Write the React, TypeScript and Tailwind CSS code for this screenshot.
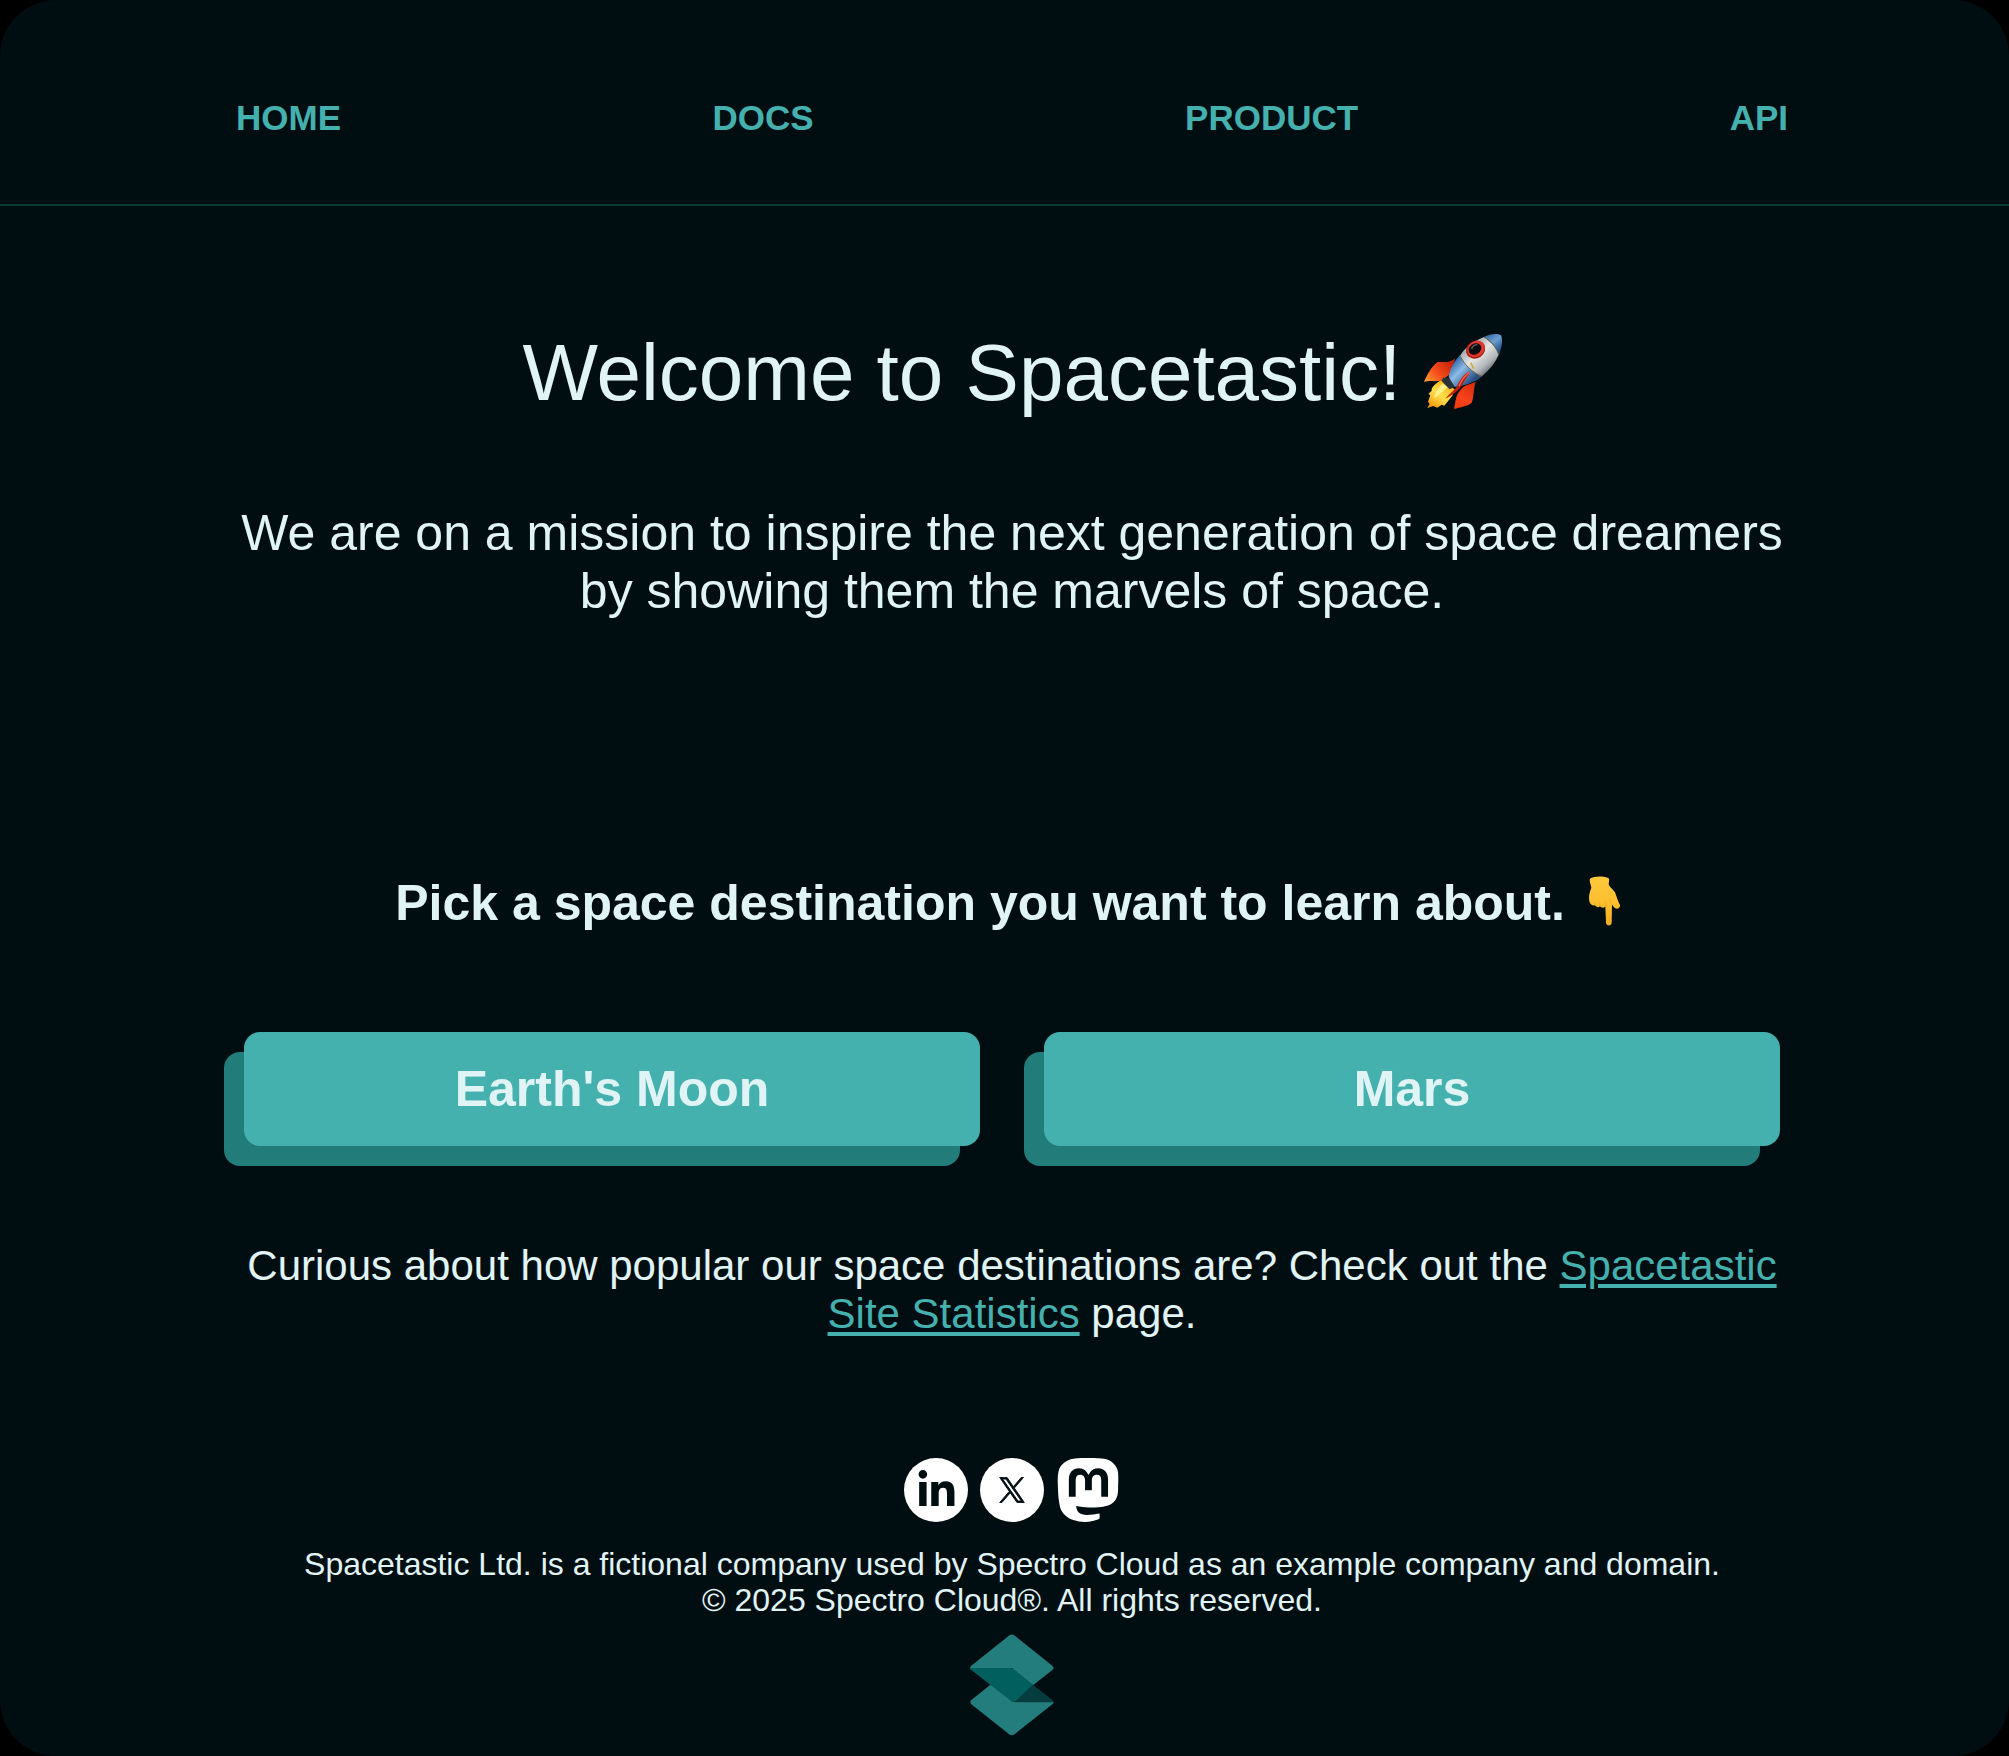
import { FaLinkedinIn } from "react-icons/fa6";
import { SiMastodon } from "react-icons/si";

const navItems = ["HOME", "DOCS", "PRODUCT", "API"];
const destinations = ["Earth's Moon", "Mars"];

function Rocket() {
  return (
    <svg viewBox="66 60 234 240" className="inline-block h-[80px] w-[78px] align-[-11px]" role="img" aria-label="rocket">
      <defs>
        <linearGradient id="body" x1="180" y1="110" x2="250" y2="190" gradientUnits="userSpaceOnUse">
          <stop offset="0" stopColor="#8f9a9e" />
          <stop offset="0.45" stopColor="#e4e6e6" />
          <stop offset="0.8" stopColor="#b3b7b9" />
          <stop offset="1" stopColor="#6d7478" />
        </linearGradient>
        <linearGradient id="blue" x1="150" y1="160" x2="205" y2="215" gradientUnits="userSpaceOnUse">
          <stop offset="0" stopColor="#3a6fae" />
          <stop offset="0.4" stopColor="#8dbbe6" />
          <stop offset="1" stopColor="#274f86" />
        </linearGradient>
        <linearGradient id="nose" x1="260" y1="75" x2="296" y2="120" gradientUnits="userSpaceOnUse">
          <stop offset="0" stopColor="#3f74ad" />
          <stop offset="0.4" stopColor="#6c9fd0" />
          <stop offset="1" stopColor="#1f4680" />
        </linearGradient>
        <linearGradient id="finLeft" x1="140" y1="150" x2="72" y2="214" gradientUnits="userSpaceOnUse">
          <stop offset="0" stopColor="#c8230c" />
          <stop offset="0.55" stopColor="#f8501c" />
          <stop offset="1" stopColor="#ffa030" />
        </linearGradient>
        <linearGradient id="finRight" x1="215" y1="215" x2="160" y2="292" gradientUnits="userSpaceOnUse">
          <stop offset="0" stopColor="#d62c0e" />
          <stop offset="0.6" stopColor="#f8431a" />
          <stop offset="1" stopColor="#ec3810" />
        </linearGradient>
        <linearGradient id="flame" x1="135" y1="215" x2="85" y2="285" gradientUnits="userSpaceOnUse">
          <stop offset="0" stopColor="#ffb41c" />
          <stop offset="0.5" stopColor="#ffe04a" />
          <stop offset="1" stopColor="#f59a10" />
        </linearGradient>
      </defs>
      <path d="M160 142C142 158 125 152 106 153C86 170 75 192 66 213C83 207 104 214 121 207L144 190Z" fill="url(#finLeft)" />
      <path d="M221 212C209 219 186 220 176 236C160 253 161 271 156 294C174 288 198 286 209 275C215 262 213 244 221 212Z" fill="url(#finRight)" />
      <path d="M118 207C97 219 87 232 89 239L79 249L85 253L78 272L83 279L76 291L94 285L106 290L119 281L127 284L151 254L158 235Z" fill="url(#flame)" />
      <path d="M121 218C108 231 99 245 96 262C111 253 126 239 137 228Z" fill="#fff08a" />
      <path d="M124 200L118 209L143 235L156 229L145 200Z" fill="#283238" />
      <path d="M174 132C156 151 144 174 140 197L158 228C186 224 221 215 239 196Z" fill="url(#blue)" />
      <path d="M246 78C214 91 188 110 174 134C187 161 210 184 240 196C264 176 281 153 291 130C283 109 267 92 246 78Z" fill="url(#body)" />
      <path d="M246 78C264 68 287 66 297 73C303 84 300 111 291 132C284 108 267 91 246 78Z" fill="url(#nose)" />
      <path d="M246 78C266 90 283 108 290 132M174 134C187 161 210 184 240 196" fill="none" stroke="#6f6644" strokeWidth="3" />
      <path d="M206 155L215 173" stroke="#d1ad3a" strokeWidth="5" />
      <ellipse cx="221" cy="116" rx="30" ry="26" transform="rotate(-32 221 116)" fill="#a7190d" />
      <ellipse cx="222" cy="114" rx="28" ry="23" transform="rotate(-32 222 114)" fill="#e0392b" />
      <ellipse cx="219" cy="114" rx="20" ry="16" transform="rotate(-32 219 114)" fill="#0c0d0e" />
      <path d="M209 114C211 106 219 101 226 101" fill="none" stroke="#5c6468" strokeWidth="4" />
      <path d="M204 181C188 187 174 205 164 229C151 242 137 255 130 263C155 250 176 236 187 211C193 200 201 193 204 181Z" fill="#c11c12" />
      <path d="M202 184C187 196 178 210 171 225" fill="none" stroke="#f2664f" strokeWidth="4" />
    </svg>
  );
}

function PointingHand() {
  return (
    <svg viewBox="60 46 150 150" className="inline-block h-[50px] w-[50px] align-[-6px]" role="img" aria-label="pointing down">
      <defs>
        <linearGradient id="skin" x1="0" y1="48" x2="0" y2="195" gradientUnits="userSpaceOnUse">
          <stop offset="0" stopColor="#fdc93a" />
          <stop offset="0.6" stopColor="#fcbd2c" />
          <stop offset="1" stopColor="#f3ab22" />
        </linearGradient>
      </defs>
      <path
        d="M93 54C105 46 137 46 149 53C152 59 149 65 149 71C152 81 162 86 168 95C173 108 176 120 183 133C184 142 175 147 168 142C164 140 162 135 159 132L158 187C157 197 142 197 141 187L139 138C133 143 127 142 123 137C118 142 111 139 108 134C101 136 94 131 92 125C88 112 90 99 97 81C96 72 90 63 93 54Z"
        fill="url(#skin)"
      />
      <path d="M108 133C106 130 106 126 107 124M123 137C121 133 121 129 122 126M139 138C137 133 138 128 140 124M159 132C155 127 153 121 153 116" fill="none" stroke="#eda520" strokeWidth="2" strokeLinecap="round" />
    </svg>
  );
}

function SpectroLogo() {
  return (
    <svg viewBox="59 40 255 309" className="h-[102px] w-[84px]" role="img" aria-label="Spectro Cloud">
      <path d="M62 149Q57 143 62 137L177 45Q186 37 195 45L309 136Q316 143 309 149L250 195L186 143Z" fill="#237d7c" />
      <path d="M122 193L63 240Q57 246 63 253L177 343Q186 351 195 343L309 253Q313 250 313 246H190Z" fill="#237d7c" />
      <path d="M250 194L309 240Q313 243 313 247H195Z" fill="#053d3e" />
      <path d="M60 143H180Q188 143 194 148L250 194L200 242Q193 249 184 243L64 150Q60 147 60 143Z" fill="#015f5e" />
    </svg>
  );
}

export default function App() {
  return (
    <div className="bg-black font-['Liberation_Sans',Arial,sans-serif]">
      <div className="rounded-[56px] bg-[#000e12] text-[#e0f4f5]">
        <header className="border-b-2 border-[#0c3b36] pt-[98px] pb-[66px] pl-[15px]">
          <nav className="mx-auto flex max-w-[1552px] justify-between text-[35px] leading-10 font-bold text-[#45b1af]">
            {navItems.map((item) => (
              <a key={item} href="#">{item}</a>
            ))}
          </nav>
        </header>

        <main className="pt-[121px] pl-[15px] text-center">
          <div className="mx-auto max-w-[1556px]">
            <h1 className="text-[80px] leading-[92px]">
              Welcome to Spacetastic! <Rocket />
            </h1>
            <p className="mt-[85px] text-[50px] leading-[58px]">
              We are on a mission to inspire the next generation of space dreamers by showing them the marvels of space.
            </p>
            <h2 className="mt-[254px] text-[50px] leading-[58px] font-bold">
              Pick a space destination you want to learn about. <PointingHand />
            </h2>
            <div className="mx-auto mt-[100px] grid max-w-[1536px] grid-cols-2 gap-16">
              {destinations.map((name) => (
                <button
                  key={name}
                  className="h-[114px] rounded-2xl bg-[#45b1af] text-[50px] leading-[58px] font-bold shadow-[-20px_20px_0_#227c7a]"
                >
                  {name}
                </button>
              ))}
            </div>
            <p className="mt-24 text-[42px] leading-[48px]">
              Curious about how popular our space destinations are? Check out the{" "}
              <a href="#" className="text-[#45b1af] underline decoration-4 underline-offset-4">Spacetastic Site Statistics</a> page.
            </p>
          </div>
        </main>

        <footer className="flex flex-col items-center pt-[120px] pb-5 pl-[15px] text-center text-[32px] leading-9">
          <div className="flex gap-3 text-white">
            <a href="#" aria-label="LinkedIn" className="flex size-16 items-center justify-center rounded-full bg-white text-[#000e12]">
              <FaLinkedinIn className="size-[41px]" />
            </a>
            <a href="#" aria-label="X" className="flex size-16 items-center justify-center rounded-full bg-white text-[#000e12]">
              <svg viewBox="-20 -20 1240 1267" className="size-[26px]" fill="currentColor" stroke="currentColor" strokeWidth="45">
                <path d="M714.163 519.284L1160.89 0H1055.03L667.137 450.887L357.328 0H0L468.492 681.821L0 1226.37H105.866L515.491 750.218L842.672 1226.37H1200L714.137 519.284H714.163ZM569.165 687.828L521.697 619.934L144.011 79.6944H306.615L611.412 515.685L658.88 583.579L1055.08 1150.3H892.476L569.165 687.854V687.828Z" />
              </svg>
            </a>
            <a href="#" aria-label="Mastodon">
              <SiMastodon className="size-16" />
            </a>
          </div>
          <p className="mt-6 mb-4">
            Spacetastic Ltd. is a fictional company used by Spectro Cloud as an example company and domain.
            <br />© 2025 Spectro Cloud®. All rights reserved.
          </p>
          <SpectroLogo />
        </footer>
      </div>
    </div>
  );
}
